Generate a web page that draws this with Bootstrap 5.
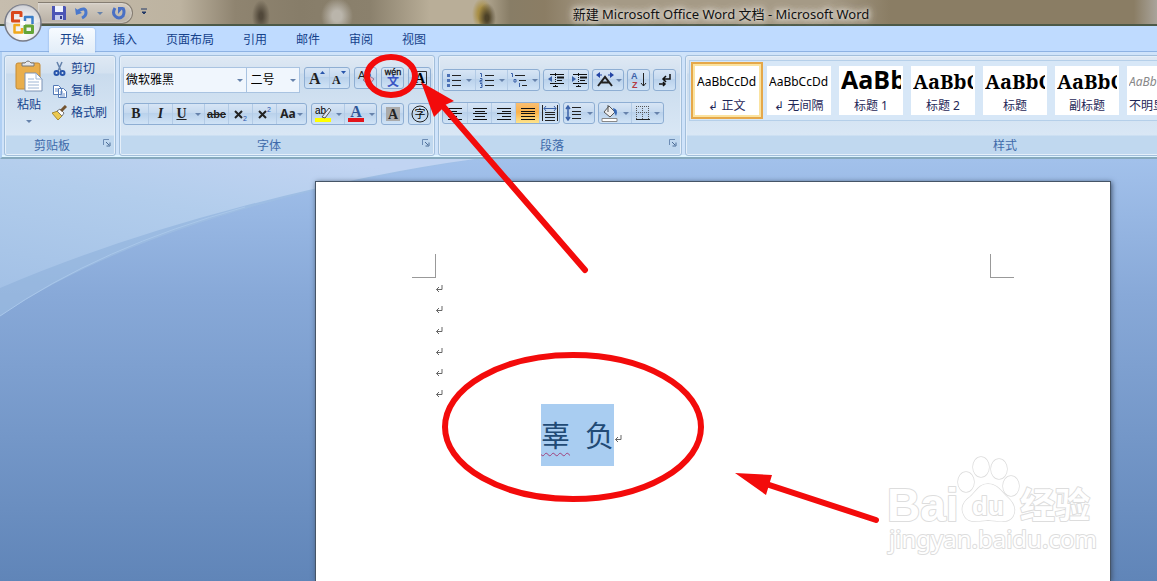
<!DOCTYPE html>
<html lang="zh-CN">
<head>
<meta charset="utf-8">
<meta name="viewport" content="width=device-width, initial-scale=1">
<title>新建 Microsoft Office Word 文档 - Microsoft Word</title>
<link href="https://cdn.jsdelivr.net/npm/bootstrap@5.3.0/dist/css/bootstrap.min.css" rel="stylesheet">
<style>
body{font:12px/18px "Noto Sans","Noto Sans CJK SC",sans-serif;color:#15428b;background:#bfdbff}
button,select{font:inherit;color:inherit}
svg{display:block;flex:none}
.titlebar{height:26px;border-bottom:2px solid #4c5947;color:#111;
 background:radial-gradient(ellipse 9px 16px at 261px 16px,#51483a 20%,transparent),
 radial-gradient(ellipse 16px 18px at 337px 16px,#bab5ab 30%,transparent),
 radial-gradient(ellipse 9px 15px at 487px 18px,#4c4128 20%,transparent),
 radial-gradient(ellipse 10px 16px at 482px 14px,#a98f45 40%,transparent),
 linear-gradient(90deg,#c6bdae 0,#bdb3a0 180px,#8f8470 235px,#877d69 300px,#8b816d 370px,#b9ae98 430px,#b9ae98 480px,#887d66 510px,#8b7d64 545px,#a59a86 600px,#a59a86 830px,#8a7d64 890px,#8a7d64 98%,#a9a49b 100%)}
.caption{position:absolute;left:0;right:0;top:5px;padding-left:285px;text-align:center;color:#111;font-size:13px;text-shadow:0 0 5px #ddd7cd,0 0 5px #ddd7cd,0 0 8px #ddd7cd,0 0 10px #ddd7cd}
.orb{position:absolute;left:3px;top:3px;z-index:2;border:0;padding:0;background:none}
.quickbar{margin-left:38px;width:95px;height:22px;margin-top:2px;padding-left:13px;border:1px solid #857d72;border-left:0;border-radius:0 11px 11px 0;background:linear-gradient(#d4cdc3,#b8b0a5);box-shadow:inset 0 0 2px #eee}
.plain{border:0;background:none;padding:0}
.tabrow{height:26px;padding:2px 0 0 49px;gap:7px;border-bottom:1px solid #8db2e3}
.tabrow a{display:block;height:25px;padding:3px 11px;color:#15428b;text-decoration:none;border-radius:3px 3px 0 0}
.tabrow a.active{background:linear-gradient(#f7fbff,#e2edf8);box-shadow:0 0 2px #7da3d3;clip-path:inset(-3px -3px 0)}
.ribbon{height:107px;padding:3px 0 1px 2px;gap:3px;overflow:hidden;background:#cfe3fa;border-left:2px solid #b0cff3;border-bottom:2px solid #86a9bd;box-shadow:inset 0 -2px #dff5ff}
.chunk{flex:none;border:1px solid #a3bfdb;border-radius:3px;display:flex;flex-direction:column;background:linear-gradient(#dfe9f4 0,#d3e1f0 17px,#c9dbed 18px,#d9e7f5 79px,#c0d8ef 80px,#c0d8ef);box-shadow:inset 0 0 0 1px #e5eff9}
.chunk-body{flex:1;min-height:0}
.chunk-foot{height:20px;padding-top:2px;flex:none;color:#3e6aaa;text-align:center;position:relative}
.launch{position:absolute;right:4px;top:4px}
.w-clip{width:112px}.w-font{width:316px}.w-para{width:244px}.w-style{width:640px}
.paste{margin-left:9px;gap:2px}
.rows-font{padding:11px 3px 0;gap:10px}
.rows-para{padding:13px 3px 0;gap:11px}
.gap3{gap:3px}
.tools{display:flex;height:22px;border:1px solid #8eaed3;border-radius:3px;background:linear-gradient(#d7e5f5,#c5d9ef 45%,#b9d1eb 46%,#d0e3f6)}
.tools button{border:0;border-left:1px solid #b3cbe6;background:none;padding:0;display:flex;align-items:center;justify-content:center;gap:4px;width:24px;color:#222}
.tools button:first-child{border-left:0}
.tools button.wide{width:32px}
.tools button.mid{width:30px;gap:1px}
.tools button.slim{width:20px}
.tools button.on{background:linear-gradient(#f9bf72,#fbb14a 45%,#fde48c)}
.tools.single{width:23px}
.serif{font:bold 14px/16px "Liberation Serif",serif}
.struck{font:bold 11px/16px "Liberation Sans",sans-serif}
.drop{border:4px solid transparent;border-width:3px 3px 0;border-top-color:#6682ab;width:0;height:0;flex:none}
.pick{appearance:none;height:26px;border:1px solid #a9c3e1;border-radius:0;padding:0 2px;color:#000;background:#f0f6fd url("data:image/svg+xml,%3Csvg xmlns='http://www.w3.org/2000/svg' width='6' height='3'%3E%3Cpath d='M0 0h6L3 3z' fill='%236682ab'/%3E%3C/svg%3E") no-repeat right 3px center}
.pick-face{width:125px}.pick-size{width:54px;border-left:0;padding-left:4px}
.gallery{margin:4px 0 14px 3px;padding:5px;gap:8px;border:1px solid #b5cfe9;background:#d7e7f7;overflow:hidden;flex:1}
.tile{flex:none;width:64px;height:49px;padding:0;border:0;background:#fff;color:#1f2757;display:flex;flex-direction:column;align-items:center;overflow:hidden}
.tile .sample{height:31px;line-height:31px;white-space:nowrap;color:#000;width:60px;overflow:hidden;text-align:left}
.tile .tag{line-height:18px;white-space:nowrap}
.tile.chosen{outline:2px solid #e5a84a;outline-offset:2px;box-shadow:0 0 0 2px #fbe3a0}
.tile .sans-b{font:bold 25px/27px "Open Sans","Noto Sans",sans-serif}.tile .serif-b{font:bold 20px/31px "Noto Serif","DejaVu Serif","Liberation Serif",serif}
.tile .faint{color:#888;font-style:italic}
.desk{position:relative;overflow:hidden;min-height:calc(100vh - 159px);padding:22px 46px 0 315px;background:linear-gradient(#a2c1eb,#88a9d8 32%,#6085b8)}
.swoosh{position:absolute;left:0;top:0}
.paper{position:relative;min-height:calc(100vh - 181px);background:#fff;border:1px solid #465567;border-bottom:0;box-shadow:1px 1px 5px #42546e;padding:96px 119px 0}
.corner{position:absolute;top:72px;width:24px;height:24px;border-bottom:1px solid #999}
.corner.l{left:96px;border-right:1px solid #999}.corner.r{right:96px;border-left:1px solid #999}
.paper p{margin:0;height:21px;display:flex;align-items:center}
.paper p.word{height:62px;padding-left:106px}
.sel{background:#a9cdf1;color:#214a75;font-size:29px;height:62px;line-height:64px;white-space:pre;display:flex}
.bad{text-decoration:underline wavy #a0417c 1px;text-underline-offset:5px}
.marks{position:absolute;left:0;top:0;pointer-events:none;z-index:5}
</style>
</head>
<body class="position-relative overflow-hidden">
<svg width="0" height="0" class="position-absolute">
 <symbol id="ret" viewBox="0 0 8 8"><path d="M7 0v4.500H1.500M4 2L1.500 4.500L4 7" fill="none" stroke="#666"/></symbol>
 <symbol id="lch" viewBox="0 0 8 8"><path d="M.5 6V.5H6" fill="none" stroke="#6d8db5"/><path d="M3 3l3 3M7 3.500V7H3.500" fill="none" stroke="#4b6c96"/></symbol>
</svg>

<header class="titlebar position-relative d-flex align-items-start">
 <button class="orb" aria-label="Office"><svg width="40" height="40" viewBox="0 0 40 40">
  <defs><radialGradient id="og" cx=".5" cy=".8" r=".8"><stop offset="0" stop-color="#fff"/><stop offset=".6" stop-color="#dfe1e6"/><stop offset="1" stop-color="#a9abb4"/></radialGradient></defs>
  <circle cx="20" cy="20" r="18" fill="url(#og)" stroke="#777b88" stroke-width="1.500"/><path d="M3 19a17 17 0 0 1 34 0Q20 24 3 19" fill="#fff" opacity=".45"/>
  <g fill="none" stroke-width="3" stroke-linejoin="round"><path d="M17 18H9.500V9.500H18V14" stroke="#d9481c"/><path d="M22 18v-4h7.500v7" stroke="#3b7fc9" stroke-width="2.500"/><path d="M17 22h-5.500v7.500H19V25" stroke="#f0a81c" stroke-width="2.500"/><path d="M22 23h7.500v6.500H22z" stroke="#64a536"/></g>
  <path d="M18 18h4v4h-4z" fill="#fff"/></svg></button>
 <div class="quickbar d-flex align-items-center">
  <button class="plain me-2" aria-label="保存"><svg width="16" height="16" viewBox="0 0 16 16"><path d="M1 1h13l1 1v13H1z" fill="#4b55b5"/><path d="M4 1h8v6H4z" fill="#eef3ff"/><path d="M4 10h8v5H4z" fill="#c4cbed"/><path d="M9 11h2v3H9z" fill="#333c89"/></svg></button>
  <button class="plain" aria-label="撤消"><svg width="14" height="14" viewBox="0 0 14 14"><path d="M3 5Q11 0 11 7q0 3-4 5" fill="none" stroke="#4a78cc" stroke-width="3"/><path d="M0 2l1 7 6-2z" fill="#4a78cc"/></svg></button>
  <span class="drop mx-2"></span>
  <button class="plain" aria-label="恢复"><svg width="16" height="16" viewBox="0 0 16 16"><path d="M4 3Q1 8 4 11q4 4 8 0 2-4 0-8" fill="none" stroke="#4a70c4" stroke-width="3"/><path d="M7 9V2h6z" fill="#4a70c4"/></svg></button>
 </div>
 <button class="plain mt-2 ms-2" aria-label="自定义快速访问工具栏"><svg width="6" height="8" viewBox="0 0 6 8"><path d="M0 1h6M1 4h4L3 6z" fill="#243b68" stroke="#243b68"/></svg></button>
 <div class="caption">新建 Microsoft Office Word 文档 - Microsoft Word</div>
</header>

<nav class="tabrow d-flex">
 <a class="active" href="#">开始</a><a href="#">插入</a><a href="#">页面布局</a><a href="#">引用</a><a href="#">邮件</a><a href="#">审阅</a><a href="#">视图</a>
</nav>

<div class="ribbon d-flex">
 <section class="chunk w-clip">
  <div class="chunk-body d-flex pt-1">
   <button class="plain paste d-flex flex-column align-items-center">
    <svg width="30" height="34" viewBox="0 0 30 34"><rect x="2" y="3" width="24" height="26" rx="2" fill="#e9ae4c" stroke="#c48a35"/><path d="M8 6V3h3q3-4 6 0h3v3z" fill="#e4e6ea" stroke="#777"/><path d="M11 13h11l6 6v12H11z" fill="#fff" stroke="#7d93b5"/><path d="M22 13v6h6M14 19h6M14 22h11M14 25h11M14 28h11" fill="none" stroke="#9fb6d4"/></svg>
    <span>粘贴</span><span class="drop mt-1"></span></button>
   <div class="d-flex flex-column ms-2">
    <button class="plain d-flex align-items-center gap-1"><svg width="15" height="16" viewBox="0 0 15 16"><path d="M5 1l4 9M10 1l-4 9" stroke="#6482ab" stroke-width="1.500"/><circle cx="4.500" cy="12" r="2" fill="none" stroke="#2855ab" stroke-width="2"/><circle cx="10.500" cy="12" r="2" fill="none" stroke="#2855ab" stroke-width="2"/></svg>剪切</button>
    <button class="plain d-flex align-items-center gap-1 my-1"><svg width="15" height="16" viewBox="0 0 15 16"><path d="M1.500 2.500h5l3 3v6h-8zM6.500 5.500h5l3 3v6h-8z" fill="#fff" stroke="#5379b5"/><path d="M3 6h3M3 8h3M8 9h3M8 11h5M8 13h5" stroke="#6d90c8"/></svg>复制</button>
    <button class="plain d-flex align-items-center gap-1"><svg width="15" height="16" viewBox="0 0 15 16"><path d="M0 8l6-2 4 5-4 4z" fill="#ecc94f" stroke="#a78a32"/><path d="M5 6l3-2 4 4-2 3z" fill="#fff" stroke="#777"/><path d="M9 6l5-5" stroke="#745431" stroke-width="3"/></svg>格式刷</button>
   </div>
  </div>
  <div class="chunk-foot"><span class="me-3">剪贴板</span><button class="plain launch" aria-label="剪贴板选项"><svg width="8" height="8"><use href="#lch"/></svg></button></div>
 </section>

 <section class="chunk w-font">
  <div class="chunk-body rows-font d-flex flex-column">
   <div class="d-flex">
    <select class="pick pick-face" aria-label="字体"><option>微软雅黑</option></select>
    <select class="pick pick-size" aria-label="字号"><option>二号</option></select>
    <div class="tools ms-1"><button aria-label="增大字体"><svg width="18" height="18" viewBox="0 0 18 18"><text x="1" y="15" font-family="Liberation Serif" font-weight="bold" font-size="16" fill="#222">A</text><path d="M12 5l2.500-3L17 5z" fill="#2855ab"/></svg></button><button class="slim" aria-label="缩小字体"><svg width="18" height="18" viewBox="0 0 18 18"><text x="1" y="15" font-family="Liberation Serif" font-weight="bold" font-size="12" fill="#222">A</text><path d="M10 2h5l-2.500 3z" fill="#2855ab"/></svg></button></div>
    <div class="tools single ms-1"><button aria-label="清除格式"><svg width="20" height="18" viewBox="0 0 20 18"><text x="2" y="10" font-family="Liberation Sans" font-size="11" fill="#222">Aa</text><path d="M7 11l5-5 6 4-5 6z" fill="#eeb7c2" stroke="#8a7d9c"/></svg></button></div>
    <div class="tools single ms-1"><button aria-label="拼音指南"><svg width="20" height="20" viewBox="0 0 20 20"><text x="10" y="7" text-anchor="middle" font-family="Liberation Sans" font-size="9" fill="#111" stroke="#111" stroke-width=".3">wén</text><text x="10" y="18" text-anchor="middle" font-family="Noto Sans CJK SC" font-size="12" font-weight="bold" fill="#3a55c4">文</text></svg></button></div>
    <div class="tools single ms-1"><button aria-label="字符边框"><svg width="18" height="18" viewBox="0 0 18 18"><path d="M2.500 2.500h13v13h-13z" fill="none" stroke="#333"/><text x="9" y="14" text-anchor="middle" font-family="Liberation Serif" font-weight="bold" font-size="14">A</text></svg></button></div>
   </div>
   <div class="d-flex">
    <div class="tools"><button class="serif">B</button><button class="serif fst-italic">I</button><button class="wide serif"><u>U</u><span class="drop ms-1"></span></button><button class="struck"><s>abc</s></button><button aria-label="下标"><svg width="18" height="18" viewBox="0 0 18 18"><path d="M3 6l7 7M10 6l-7 7" stroke="#222" stroke-width="2"/><text x="11" y="16" font-family="Liberation Sans" font-size="7" fill="#2855ab">2</text></svg></button><button aria-label="上标"><svg width="18" height="18" viewBox="0 0 18 18"><path d="M3 6l7 7M10 6l-7 7" stroke="#222" stroke-width="2"/><text x="11" y="7" font-family="Liberation Sans" font-size="7" fill="#2855ab">2</text></svg></button><button class="mid"><b>Aa</b><span class="drop"></span></button></div>
    <div class="tools ms-1"><button class="wide" aria-label="突出显示"><svg width="18" height="18" viewBox="0 0 18 18"><path d="M1 13h16v4H1z" fill="#ff0"/><text x="1" y="9" font-family="Liberation Sans" font-size="10">ab</text><path d="M8 12l7-9 2 2-6 8z" fill="#dfe8f5" stroke="#555"/></svg><span class="drop"></span></button><button class="wide" aria-label="字体颜色"><svg width="18" height="18" viewBox="0 0 18 18"><path d="M1 13h16v4H1z" fill="#e3141b"/><text x="9" y="12" text-anchor="middle" font-family="Liberation Serif" font-weight="bold" font-size="16" fill="#2e5597">A</text></svg><span class="drop"></span></button></div>
    <div class="tools single ms-1"><button aria-label="字符底纹"><svg width="18" height="18" viewBox="0 0 18 18"><path d="M2 2h14v14H2z" fill="#aaa"/><text x="9" y="14" text-anchor="middle" font-family="Liberation Serif" font-weight="bold" font-size="14" fill="#222">A</text></svg></button></div>
    <div class="tools single ms-1"><button aria-label="带圈字符"><svg width="18" height="18" viewBox="0 0 18 18"><circle cx="9" cy="9" r="8" fill="none" stroke="#222"/><text x="9" y="13" text-anchor="middle" font-family="Noto Sans CJK SC" font-size="11">字</text></svg></button></div>
   </div>
  </div>
  <div class="chunk-foot"><span class="me-3">字体</span><button class="plain launch" aria-label="字体选项"><svg width="8" height="8"><use href="#lch"/></svg></button></div>
 </section>

 <section class="chunk w-para">
  <div class="chunk-body rows-para d-flex flex-column">
   <div class="d-flex gap3">
    <div class="tools"><button class="wide" aria-label="项目符号"><svg width="16" height="16" viewBox="0 0 16 16"><path d="M6 3.500h9M6 8.500h9M6 13.500h9" stroke="#222"/><path d="M1 2h3v3H1zM1 7h3v3H1zM1 12h3v3H1z" fill="#4b70b5"/></svg><span class="drop"></span></button><button class="wide" aria-label="编号"><svg width="16" height="16" viewBox="0 0 16 16"><path d="M6 3.500h9M6 8.500h9M6 13.500h9" stroke="#222"/><path d="M1 1.500h1.500V5M1 6.500h2v2H1v1.500h2.500M1 11.500h2v4H1M2 13.500h1" fill="none" stroke="#3b61a8"/></svg><span class="drop"></span></button><button class="wide" aria-label="多级列表"><svg width="18" height="16" viewBox="0 0 18 16"><path d="M5 3.500h10M9 8.500h7M12 13.500h5" stroke="#222"/><path d="M1 1.500h1.500V5M4 7.500h2V10H4zM9.500 11v4" fill="none" stroke="#3b61a8"/></svg><span class="drop"></span></button></div>
    <div class="tools"><button aria-label="减少缩进"><svg width="18" height="16" viewBox="0 0 18 16"><path d="M3 2.500h14M10 8.500h5M3 11.500h14M6 14.500h5" stroke="#111"/><path d="M10 5.500h7" stroke="#111" stroke-width="2"/><path d="M8.500 1v14" stroke="#111" stroke-dasharray="1 1"/><path d="M1 7l4-3v6z" fill="#3b61a8"/></svg></button><button class="slim" aria-label="增加缩进"><svg width="18" height="16" viewBox="0 0 18 16"><path d="M3 2.500h14M10 8.500h5M3 11.500h14M6 14.500h5" stroke="#111"/><path d="M10 5.500h7" stroke="#111" stroke-width="2"/><path d="M8.500 1v14" stroke="#111" stroke-dasharray="1 1"/><path d="M6 7L2 4v6z" fill="#3b61a8"/></svg></button></div>
    <div class="tools"><button class="mid" aria-label="中文版式"><svg width="20" height="16" viewBox="0 0 20 16"><path d="M3 14L10 5l7 9M6 10.500h8" fill="none" stroke="#222" stroke-width="2"/><path d="M5 0v6L1 3zM15 0v6l4-3z" fill="#2344a5"/><path d="M4 3h3M13 3h3" stroke="#2344a5"/></svg><span class="drop"></span></button></div>
    <div class="tools single"><button aria-label="排序"><svg width="18" height="18" viewBox="0 0 18 18"><text x="1" y="8" font-family="Liberation Sans" font-weight="bold" font-size="9" fill="#3b61a8">A</text><text x="2" y="17" font-family="Liberation Sans" font-weight="bold" font-size="9" fill="#b43a44">Z</text><path d="M13.500 2v13M11 12l2.500 3 2.500-3" fill="none" stroke="#222"/></svg></button></div>
    <div class="tools single"><button aria-label="显示编辑标记"><svg width="16" height="16" viewBox="0 0 16 16"><path d="M13 2v5H6M9 4L6 7l3 3M2 12h6M6 10l2 2-2 2" fill="none" stroke="#111" stroke-width="1.500"/></svg></button></div>
   </div>
   <div class="d-flex gap3">
    <div class="tools"><button aria-label="左对齐"><svg width="14" height="13"><path d="M0 1.500h14M0 4.500h9M0 6.500h14M0 9.500h9M0 12.500h14" stroke="#111"/></svg></button><button aria-label="居中"><svg width="14" height="13"><path d="M0 1.500h14M2 4.500h10M0 6.500h14M2 9.500h10M0 12.500h14" stroke="#111"/></svg></button><button aria-label="右对齐"><svg width="14" height="13"><path d="M0 1.500h14M5 4.500h9M0 6.500h14M5 9.500h9M0 12.500h14" stroke="#111"/></svg></button><button class="on" aria-label="两端对齐"><svg width="14" height="13"><path d="M0 1.500h14M0 4.500h14M0 6.500h14M0 9.500h14M0 12.500h14" stroke="#111"/></svg></button><button class="slim" aria-label="分散对齐"><svg width="16" height="16"><path d="M.5 0v16M15.500 0v16M3 7.500h10M3 9.500h10M3 12.500h10M3 15.500h10" stroke="#222"/><path d="M2 3.500h12M4 1L2 3.500 4 6M12 1l2 2.500L12 6" fill="none" stroke="#3b61a8"/></svg></button></div>
    <div class="tools"><button class="mid" aria-label="行距"><svg width="17" height="16" viewBox="0 0 17 16"><path d="M7 2.500h9M7 6.500h9M7 9.500h9M7 13.500h9" stroke="#222"/><path d="M3 1v14M1 4l2-3 2 3M1 12l2 3 2-3" fill="none" stroke="#3b61a8" stroke-width="1.500"/></svg><span class="drop ms-1"></span></button></div>
    <div class="tools"><button class="wide" aria-label="底纹"><svg width="18" height="18" viewBox="0 0 18 18"><path d="M1 14.500h15v3H1z" fill="#fff" stroke="#888"/><path d="M3 8l5-6 6 6-5 5z" fill="#eee" stroke="#555"/><path d="M7 8V1" stroke="#555"/><path d="M12 4q6 1 3 8l-2-4z" fill="#3667b5"/></svg><span class="drop"></span></button><button class="wide" aria-label="边框"><svg width="14" height="14"><path d="M.5 0v14M6.500 0v14M12.500 0v14M0 .5h13M0 6.500h13" stroke="#555" stroke-dasharray="1 1"/><path d="M0 13.500h14" stroke="#222"/></svg><span class="drop"></span></button></div>
   </div>
  </div>
  <div class="chunk-foot"><span class="me-3">段落</span><button class="plain launch" aria-label="段落选项"><svg width="8" height="8"><use href="#lch"/></svg></button></div>
 </section>

 <section class="chunk w-style">
  <div class="chunk-body d-flex">
   <div class="gallery d-flex">
    <button class="tile chosen"><span class="sample">AaBbCcDd</span><span class="tag">↲ 正文</span></button>
    <button class="tile"><span class="sample">AaBbCcDd</span><span class="tag">↲ 无间隔</span></button>
    <button class="tile"><span class="sample sans-b">AaBb</span><span class="tag">标题 1</span></button>
    <button class="tile"><span class="sample serif-b">AaBbC</span><span class="tag">标题 2</span></button>
    <button class="tile"><span class="sample serif-b">AaBbC</span><span class="tag">标题</span></button>
    <button class="tile"><span class="sample serif-b">AaBbC</span><span class="tag">副标题</span></button>
    <button class="tile"><span class="sample faint">AaBbCcDd</span><span class="tag">不明显强调</span></button>
   </div>
  </div>
  <div class="chunk-foot">样式</div>
 </section>
</div>

<main class="desk">
 <svg class="swoosh" width="520" height="160" viewBox="0 0 520 160">
  <defs><linearGradient id="sw" x1="0" y1="1" x2=".7" y2="0"><stop offset="0" stop-color="#a3c1e6"/><stop offset=".6" stop-color="#b2cdec"/><stop offset="1" stop-color="#c1d4f2"/></linearGradient></defs>
  <path d="M0 0H475Q160 50 0 157z" fill="#a0bfe3" opacity=".6"/><path d="M0 157Q100 88 245 48" fill="none" stroke="#a9c7ea"/>
  <path d="M0 0H475Q370 14 240 48Q110 82 0 129z" fill="url(#sw)"/></svg>
 <article class="paper">
  <i class="corner l"></i><i class="corner r"></i>
  <p><svg width="8" height="8"><use href="#ret"/></svg></p><p><svg width="8" height="8"><use href="#ret"/></svg></p><p><svg width="8" height="8"><use href="#ret"/></svg></p><p><svg width="8" height="8"><use href="#ret"/></svg></p><p><svg width="8" height="8"><use href="#ret"/></svg></p><p><svg width="8" height="8"><use href="#ret"/></svg></p>
  <p class="word"><span class="sel"><span class="bad">辜</span><span>  负</span></span><svg width="8" height="8" class="mt-2"><use href="#ret"/></svg></p>
 </article>
</main>

<svg class="marks" width="1157" height="581" viewBox="0 0 1157 581">
 <g fill="none" stroke="#f30b0b" stroke-linecap="round"><ellipse cx="391" cy="76" rx="24" ry="19" stroke-width="6"/><ellipse cx="573" cy="427" rx="128" ry="72" stroke-width="6"/><path d="M442 105L585 270M760 482L876 520" stroke-width="6"/></g>
 <path d="M421 82L454 101L445 105L443 108L434 117zM735 473L772 475L766 495z" fill="#f30b0b"/>
 <g fill="#fff" stroke="#ddd" stroke-width="1.500" stroke-linejoin="round" paint-order="stroke">
  <ellipse cx="966" cy="482" rx="8" ry="10"/><ellipse cx="981" cy="467" rx="8" ry="10"/><ellipse cx="999" cy="469" rx="8" ry="10"/><ellipse cx="1011" cy="486" rx="8" ry="10"/>
  <path d="M988 484c-9 0-12 8-18 13-6 4-10 11-6 18 4 9 14 6 24 5 10 1 20 4 25-4 4-8-1-15-7-20-5-5-9-12-18-12z"/>
  <g stroke-width="2"><text x="887" y="521" font-family="Liberation Sans" font-weight="bold" font-size="46">Bai</text><text x="972" y="515" font-family="Liberation Sans" font-weight="bold" font-size="26">du</text><text x="1020" y="518" font-family="Noto Sans CJK SC" font-weight="bold" font-size="35">经验</text><text x="889" y="548" font-family="Noto Sans" font-size="24">jingyan.baidu.com</text></g>
 </g>
</svg>
<script src="https://cdn.jsdelivr.net/npm/bootstrap@5.3.0/dist/js/bootstrap.bundle.min.js"></script>
</body>
</html>
